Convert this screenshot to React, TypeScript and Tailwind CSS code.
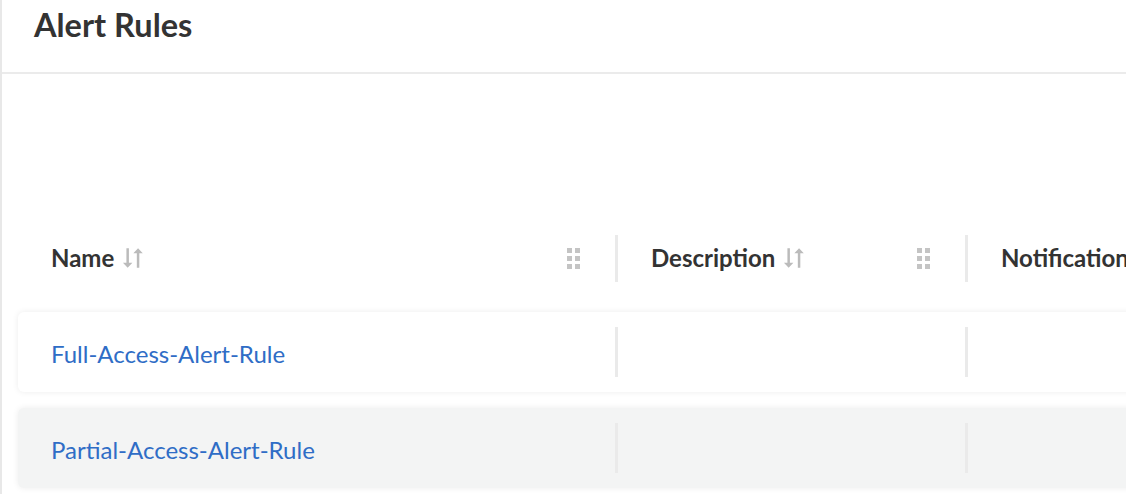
import { Fragment } from 'react';

interface Column {
  key: string;
  header: string;
  width: string;
  sortable?: boolean;
}

const columns: Column[] = [
  { key: 'name', header: 'Name', width: 'w-[597px]', sortable: true },
  { key: 'description', header: 'Description', width: 'w-[347px]', sortable: true },
  { key: 'notification', header: 'Notification', width: 'w-[400px]' },
];

const rules = [
  { id: 'full', name: 'Full-Access-Alert-Rule', striped: false },
  { id: 'partial', name: 'Partial-Access-Alert-Rule', striped: true },
];

function SortIcon() {
  return (
    <svg width="26" height="26" viewBox="0 0 24 24" className="ml-[7px] text-[#bbbbbb]" fill="currentColor">
      <path d="M5 3h2.3v13.3h3.2L6.15 21 1.8 16.3H5z" />
      <path d="M16.9 21h-2.3V7.7h-3.2L15.75 3l4.35 4.7h-3.2z" />
    </svg>
  );
}

function GripIcon() {
  return (
    <div className="grid grid-cols-2 gap-[3px]">
      {Array.from({ length: 6 }).map((_, i) => (
        <span key={i} className="block h-[5px] w-[5px] bg-[#c4c4c4]" />
      ))}
    </div>
  );
}

function Divider({ tall }: { tall?: boolean }) {
  return <div className={`w-[3px] shrink-0 bg-[#eaeaea] ${tall ? 'h-[47px]' : 'h-[50px]'}`} />;
}

export default function App() {
  return (
    <div className="h-[494px] w-[1126px] overflow-hidden border-l-2 border-[#e8e8e8] bg-white font-['Lato',sans-serif] text-[#333]">
      <div className="h-[74px] border-b-2 border-[#ebebeb] pl-[32px] pt-[5px]">
        <h1 className="text-[32.5px] font-bold leading-[40px] text-[#333]">Alert Rules</h1>
      </div>

      <div className="w-[1500px] pl-4 pt-[154px]">
        <div className="flex h-[60px] items-center">
          {columns.map((col, i) => (
            <Fragment key={col.key}>
              {i > 0 && <Divider tall />}
              <div className={`flex ${col.width} shrink-0 items-center pl-[33px] pr-[35px]`}>
                <span className="whitespace-nowrap text-[24px] font-bold">{col.header}</span>
                {col.sortable && <SortIcon />}
                {i < columns.length - 1 && (
                  <div className="ml-auto">
                    <GripIcon />
                  </div>
                )}
              </div>
            </Fragment>
          ))}
        </div>

        <div className="mt-6 flex flex-col gap-4">
          {rules.map((rule) => (
            <div
              key={rule.id}
              className={`flex h-[80px] items-center rounded-md shadow-[0_0_6px_rgba(0,0,0,0.08)] ${rule.striped ? 'bg-[#f3f4f4]' : 'bg-white'}`}
            >
              {columns.map((col, i) => (
                <Fragment key={col.key}>
                  {i > 0 && <Divider />}
                  <div className={`${col.width} shrink-0 pl-[33px] pt-[3px]`}>
                    {col.key === 'name' && (
                      <a className="text-[24px] text-[#2f6dc6]">{rule.name}</a>
                    )}
                  </div>
                </Fragment>
              ))}
            </div>
          ))}
        </div>
      </div>
    </div>
  );
}
